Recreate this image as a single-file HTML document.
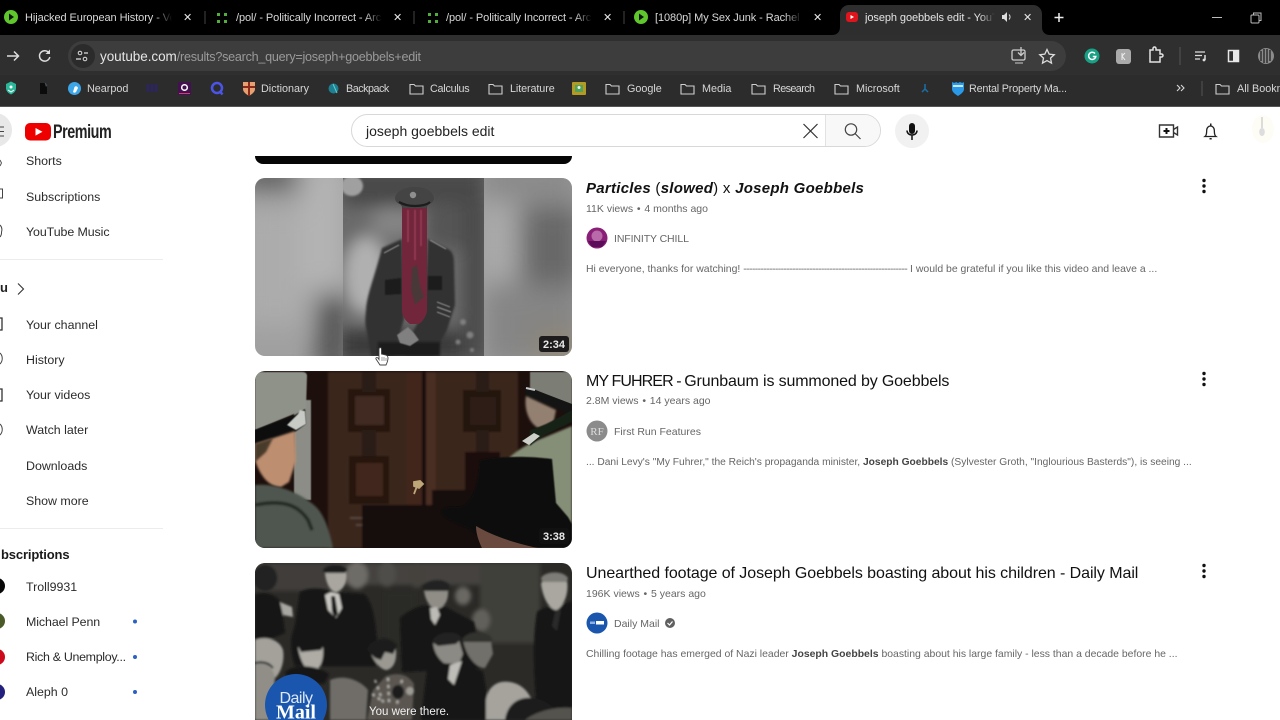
<!DOCTYPE html>
<html><head><meta charset="utf-8"><title>joseph goebbels edit - YouTube</title>
<style>
html,body{margin:0;padding:0;background:#fff}
body{width:1280px;height:720px;overflow:hidden;position:relative;font-family:"Liberation Sans",sans-serif}
.a{position:absolute}
.t{position:absolute;white-space:nowrap;line-height:20px}
.tab{color:#d8d8d8;font-size:11px;overflow:hidden;letter-spacing:-.08px;-webkit-mask-image:linear-gradient(90deg,#000 88%,transparent)}
.x{color:#e8e8e8;font-size:11px}
.bm{color:#d6d6d6;font-size:10.800px}
.sb{color:#2b2b2b;font-size:12.400px}
.ti{color:#111;font-size:16px;letter-spacing:-.07px}
.m{color:#666;font-size:10.500px}
.m i{font-style:normal;margin:0 3.800px}
.d{color:#666}
.d b{color:#444}
svg{position:absolute;overflow:hidden}
</style></head><body>

<!-- browser chrome -->
<div class="a" style="left:0;top:0;width:1280px;height:35px;background:#000"></div>
<div class="a" style="left:840px;top:5px;width:202px;height:31px;background:#2e2e2e;border-radius:9px 9px 0 0"></div>
<div class="a" style="left:0;top:35px;width:1280px;height:40px;background:#2f2f2f"></div>
<div class="a" style="left:0;top:75px;width:1280px;height:31px;background:#2c2c2c"></div>
<div class="a" style="left:0;top:106px;width:1280px;height:1px;background:#555"></div>
<div class="a" style="left:68px;top:41px;width:998px;height:30px;background:#3d3d3d;border-radius:15px"></div>
<div class="a" style="left:71px;top:44px;width:24px;height:24px;background:#2b2b2b;border-radius:12px"></div>

<svg style="left:0;top:0" width="1280" height="107" viewBox="0 0 1280 107" fill="none">
 <path d="M832 35c5 0 8-3 8-8v8zM1050 35c-5 0-8-3-8-8v8z" fill="#2e2e2e"/>
 <circle cx="11" cy="17" r="7" fill="#5fc62c"/><path d="M9 13.500l5 3.500-5 3.500z" fill="#111"/>
 <circle cx="641" cy="17" r="7" fill="#5fc62c"/><path d="M639 13.500l5 3.500-5 3.500z" fill="#111"/>
 <g fill="#4fae3c"><rect x="217" y="13" width="3" height="3"/><rect x="224" y="13" width="3" height="3"/><rect x="217" y="20" width="3" height="3"/><rect x="224" y="20" width="3" height="3"/>
 <rect x="428" y="13" width="3" height="3"/><rect x="435" y="13" width="3" height="3"/><rect x="428" y="20" width="3" height="3"/><rect x="435" y="20" width="3" height="3"/></g>
 <path d="M205 11v13M414 11v13M624 11v13" stroke="#444"/>
 <rect x="846" y="12" width="12" height="10" rx="3" fill="#e0141c"/><path d="M850.500 15l3.500 2-3.500 2z" fill="#fff"/>
 <path d="M1002 15h2l3-3v10l-3-3h-2z" fill="#ddd"/><path d="M1009 14.500a3.500 3.500 0 0 1 0 5" stroke="#ddd"/>
 <path d="M1059 13v9M1054.500 17.500h9" stroke="#eee" stroke-width="1.500"/>
 <path d="M1212 17.500h10" stroke="#bbb"/>
 <rect x="1251" y="15" width="8" height="8" stroke="#bbb" rx="1"/><path d="M1253.500 15v-2h7.500v7.500h-2" stroke="#bbb"/>
 <path d="M7 56h11M14 51.500l4.500 4.500-4.500 4.500" stroke="#ddd" stroke-width="1.500"/>
 <path d="M49 53a5.200 5.200 0 1 0 .8 4" stroke="#ddd" stroke-width="1.500"/><path d="M50 49.500v4.500h-4.500z" fill="#ddd"/>
 <circle cx="80" cy="53" r="1.800" stroke="#ddd"/><path d="M84 53h4M76 59h5" stroke="#ddd" stroke-width="1.300"/><circle cx="85" cy="59" r="1.800" stroke="#ddd"/>
 <rect x="1012" y="50" width="13" height="10" rx="1.500" stroke="#ccc" stroke-width="1.300"/><path d="M1015 63h8" stroke="#ccc"/><path d="M1021 47v8M1018 52.500l3 3 3-3" stroke="#ccc" stroke-width="1.300"/>
 <path d="M1047 49.500l2.200 4.600 5 .6-3.700 3.400 1 5-4.500-2.500-4.500 2.500 1-5-3.700-3.400 5-.6z" stroke="#ddd" stroke-width="1.300"/>
 <circle cx="1092" cy="56" r="7.500" fill="#19a186"/><path d="M1095 53.500a3.600 3.600 0 1 0 .8 3h-3" stroke="#fff" stroke-width="1.500"/>
 <rect x="1116" y="49" width="15" height="15" rx="3" fill="#aaa"/><path d="M1122 53v7M1122 56l3-3M1122 56l3 4" stroke="#eee"/>
 <path d="M1150 50h3v-1.500a1.500 1.500 0 0 1 3 0V50h4v4h1.500a1.500 1.500 0 0 1 0 3H1160v5h-10z" stroke="#e4e4e4" stroke-width="1.500"/>
 <path d="M1180 47v18" stroke="#555"/>
 <path d="M1195 52h10M1195 55.500h7M1195 59h5" stroke="#ddd" stroke-width="1.300"/><path d="M1205 55v5" stroke="#ddd" stroke-width="1.500"/><circle cx="1204" cy="60" r="1.400" fill="#ddd"/>
 <rect x="1228.500" y="50.500" width="10" height="11" stroke="#e8e8e8" stroke-width="1.500"/><rect x="1233" y="50" width="6" height="12" fill="#e8e8e8"/>
 <circle cx="1266" cy="56" r="8" fill="#8b8b8b"/><path d="M1261 51v10M1264 49v14M1267 49v14M1270 50v11" stroke="#222" stroke-width="1.300"/>
 <path d="M6 84l5-2.500 5 2.500v4c0 3-2 5-5 6.500-3-1.500-5-3.500-5-6.500z" fill="#2bb89a"/><circle cx="11" cy="87" r="1.500" fill="#fff"/><path d="M8 90l3 2 3-2" stroke="#fff"/>
 <path d="M40 83h5v3l2 1v7h-7z" fill="#0b0b0b"/><path d="M45 83l2 3" stroke="#456"/>
 <circle cx="74.500" cy="88.500" r="6.500" fill="#3da6e8"/><path d="M73 92l1.500-5a2 2 0 0 1 3.500 1l-1.500 3a2 2 0 0 1-3.500 1z" fill="#fff"/>
 <path d="M148 84v8M152 84v8M156 84v8" stroke="#2b2273" stroke-width="2"/>
 <rect x="178" y="82" width="13" height="13" fill="#431050"/><circle cx="184.500" cy="87.500" r="2.800" stroke="#fff" stroke-width="1.500"/><path d="M179 93.500h11" stroke="#d33a7a"/>
 <circle cx="217" cy="88" r="5" stroke="#4a54e8" stroke-width="2.500"/><path d="M220 91.500l2.500 3" stroke="#4a54e8" stroke-width="2.500"/>
 <path d="M243 82h12v7c0 3-3 5-6 7-3-2-6-4-6-7z" fill="#e8a070"/><path d="M249 82v14M243 87h12" stroke="#8a2a1a" stroke-width="2"/>
 <circle cx="333.500" cy="88.500" r="5" fill="#1d7f92"/><path d="M333 84l4 9" stroke="#6cc"/>
 <g stroke="#cfcfcf" stroke-width="1.100">
  <path d="M410 84.500h4l1.500 1.500h7.500v8h-13z"/>
  <path d="M489 84.500h4l1.500 1.500h7.500v8h-13z"/>
  <path d="M606 84.500h4l1.500 1.500h7.500v8h-13z"/>
  <path d="M681 84.500h4l1.500 1.500h7.500v8h-13z"/>
  <path d="M752 84.500h4l1.500 1.500h7.500v8h-13z"/>
  <path d="M835 84.500h4l1.500 1.500h7.500v8h-13z"/>
  <path d="M1216 84.500h4l1.500 1.500h7.500v8h-13z"/>
 </g>
 <rect x="572" y="82" width="14" height="13" rx="1" fill="#b39a22"/><rect x="575" y="85" width="8" height="7" fill="#4fa35a"/><circle cx="579" cy="87.500" r="1.500" fill="#eee"/>
 <path d="M925 84v5l-3 3M925 89l3 3" stroke="#1b6ea8" stroke-width="1.500"/>
 <path d="M952 82c2 1 3 1 4 0l2 1 2-1c2 1 3 1 4 0v7c0 3-3 5-6 7-3-2-6-4-6-7z" fill="#2a9ae8"/><path d="M953 86h10" stroke="#fff" stroke-width="1.500"/>
 <path d="M1177 85l3 3-3 3M1181 85l3 3-3 3" stroke="#d8d8d8" stroke-width="1.100"/>
 <path d="M1202 81v15" stroke="#555"/>
</svg>

<div class="t tab" style="left:25px;top:8px;width:147px">Hijacked European History - Ver</div>
<div class="t tab" style="left:236px;top:8px;width:146px">/pol/ - Politically Incorrect - Arc</div>
<div class="t tab" style="left:446px;top:8px;width:146px">/pol/ - Politically Incorrect - Arc</div>
<div class="t tab" style="left:655px;top:8px;width:147px">[1080p] My Sex Junk - Rachel B</div>
<div class="t tab" style="left:865px;top:8px;width:130px;color:#e4e4e4">joseph goebbels edit - YouT</div>
<div class="t x" style="left:183px;top:8px">✕</div>
<div class="t x" style="left:393px;top:8px">✕</div>
<div class="t x" style="left:603px;top:8px">✕</div>
<div class="t x" style="left:813px;top:8px">✕</div>
<div class="t x" style="left:1023px;top:8px">✕</div>
<div class="t" style="left:100px;top:47px;font-size:12.600px;color:#9a9a9a;letter-spacing:-.25px"><span style="color:#e6e6e6;font-size:13.500px;letter-spacing:-.05px">youtube.com</span>/results?search_query=joseph+goebbels+edit</div>

<div class="t bm" style="left:87px;top:79px">Nearpod</div>
<div class="t bm" style="left:261px;top:79px">Dictionary</div>
<div class="t bm" style="left:346px;top:79px;letter-spacing:-.5px">Backpack</div>
<div class="t bm" style="left:430px;top:79px;letter-spacing:-.25px">Calculus</div>
<div class="t bm" style="left:510px;top:79px;letter-spacing:-.1px">Literature</div>
<div class="t bm" style="left:627px;top:79px">Google</div>
<div class="t bm" style="left:702px;top:79px">Media</div>
<div class="t bm" style="left:773px;top:79px;letter-spacing:-.6px">Research</div>
<div class="t bm" style="left:856px;top:79px">Microsoft</div>
<div class="t bm" style="left:969px;top:79px;letter-spacing:-.2px">Rental Property Ma...</div>
<div class="t bm" style="left:1237px;top:79px">All Bookmarks</div>

<!-- masthead -->
<div class="a" style="left:-22px;top:113px;width:34px;height:34px;border-radius:50%;background:#e8e8e8"></div>
<svg style="left:0;top:120px" width="8" height="24"><path d="M0 7h4M0 11.500h4M0 16h4" stroke="#444"/></svg>
<svg style="left:25px;top:123px" width="26" height="18"><rect width="26" height="17.500" rx="5" fill="#ee0000"/><path d="M10.500 5l7 3.800-7 3.800z" fill="#fff"/></svg>
<div class="t" style="left:53px;top:122px;font-size:19.500px;font-weight:bold;color:#222;letter-spacing:-.6px;transform:scaleX(.735);transform-origin:0 50%">Premium</div>

<div class="a" style="left:351px;top:114px;width:530px;height:33px;box-sizing:border-box;border:1px solid #d8d8d8;border-radius:17px"></div>
<div class="a" style="left:825px;top:115px;width:55px;height:31px;background:#f8f8f8;border-left:1px solid #e2e2e2;border-radius:0 16px 16px 0;box-sizing:border-box"></div>
<div class="t" style="left:366px;top:121px;font-size:14px;color:#222">joseph goebbels edit</div>
<svg style="left:800px;top:119px" width="70" height="24" fill="none"><path d="M3.500 5l14 14M17.500 5l-14 14" stroke="#333" stroke-width="1.200"/><circle cx="51" cy="10.500" r="5.700" stroke="#444" stroke-width="1.200"/><path d="M55 14.500l5.500 5.500" stroke="#444" stroke-width="1.200"/></svg>
<div class="a" style="left:895px;top:114px;width:34px;height:34px;border-radius:50%;background:#f1f1f1"></div>
<svg style="left:900px;top:119px" width="24" height="24" fill="none"><rect x="9" y="4" width="6" height="11" rx="3" fill="#111"/><path d="M7 11.500c0 6 10 6 10 0M12 16v5" stroke="#111" stroke-width="1.500"/></svg>
<svg style="left:1155px;top:119px" width="70" height="24" fill="none">
 <path d="M4.500 6h14v12h-14zM18.500 10.500l4-2.500v8l-4-2.500" stroke="#333" stroke-width="1.400"/><path d="M11.500 9v6M8.500 12h6" stroke="#111" stroke-width="2"/>
 <path d="M50 17.500c2-1.500 1.500-4 1.700-6.500.2-2.500 2-4 3.800-4s3.600 1.500 3.800 4c.2 2.500-.3 5 1.700 6.500z" stroke="#222" stroke-width="1.300"/><path d="M54.500 19h2.200v1.500h-2.200zM55 4.500h1.500v2H55z" fill="#222"/>
</svg>
<div class="a" style="left:1252px;top:115px;width:22px;height:28px;background:#fdfdf6;border-radius:50%"></div>
<svg style="left:1256px;top:114px" width="12" height="26"><path d="M6 3v14" stroke="#bbb"/><ellipse cx="6" cy="18" rx="2.800" ry="4" fill="#ddd"/></svg>

<!-- sidebar -->
<div class="t sb" style="left:26px;top:151px">Shorts</div>
<div class="t sb" style="left:26px;top:187px">Subscriptions</div>
<div class="t sb" style="left:26px;top:222px;letter-spacing:-.08px">YouTube Music</div>
<div class="a" style="left:0;top:259px;width:163px;height:1px;background:#ececec"></div>
<div class="t" style="left:0;top:278px;font-size:13px;font-weight:bold;color:#222">u</div>
<svg style="left:16px;top:282px" width="10" height="14" fill="none"><path d="M2 1.500l5.500 5.500-5.500 5.500" stroke="#333" stroke-width="1.100"/></svg>
<div class="t sb" style="left:26px;top:315px">Your channel</div>
<div class="t sb" style="left:26px;top:350px">History</div>
<div class="t sb" style="left:26px;top:385px">Your videos</div>
<div class="t sb" style="left:26px;top:420px">Watch later</div>
<div class="t sb" style="left:26px;top:456px">Downloads</div>
<div class="t sb" style="left:26px;top:491px">Show more</div>
<div class="a" style="left:0;top:528px;width:163px;height:1px;background:#ececec"></div>
<div class="t" style="left:1px;top:545px;font-size:13px;font-weight:bold;color:#1a1a1a;letter-spacing:-.15px">bscriptions</div>
<div class="t sb" style="left:26px;top:577px">Troll9931</div>
<div class="t sb" style="left:26px;top:612px;letter-spacing:-.08px">Michael Penn</div>
<div class="t sb" style="left:26px;top:647px;letter-spacing:-.3px">Rich &amp; Unemploy...</div>
<div class="t sb" style="left:26px;top:682px">Aleph 0</div>
<svg style="left:0;top:150px" width="145" height="570" fill="none">
 <path d="M0 10l1.500 3-1.500 3" stroke="#555"/>
 <path d="M0 39h2.500v9H0" stroke="#444"/>
 <path d="M0 75a7 7 0 0 1 1.500 7 7 7 0 0 1-1.500 5" stroke="#444"/>
 <path d="M0 168h2v12H0" stroke="#333" stroke-width="1.300"/>
 <path d="M0 203c3 3 3 8 0 11" stroke="#444"/>
 <path d="M0 239h2v12H0" stroke="#333" stroke-width="1.300"/>
 <path d="M0 274c3 3 3 8 0 11" stroke="#444"/>
 <circle cx="-3" cy="436" r="8" fill="#080808"/>
 <circle cx="-3" cy="471" r="8" fill="#4a5a28"/>
 <circle cx="-3" cy="507" r="8" fill="#cc0a1c"/>
 <circle cx="-3" cy="542" r="8" fill="#23207e"/>
 <circle cx="135" cy="471.500" r="2" fill="#2a62c4"/><circle cx="135" cy="507" r="2" fill="#2a62c4"/><circle cx="135" cy="542" r="2" fill="#2a62c4"/>
</svg>

<!-- top partial thumb -->
<div class="a" style="left:255px;top:156px;width:317px;height:8px;background:#060606;border-radius:0 0 10px 10px"></div>

<!-- Thumb 1 -->
<svg style="left:255px;top:178px;border-radius:10px" width="317" height="178" viewBox="255 178 317 178">
 <defs>
  <filter id="b14" x="-30%" y="-30%" width="160%" height="160%"><feGaussianBlur stdDeviation="13"/></filter>
  <filter id="b8" x="-30%" y="-30%" width="160%" height="160%"><feGaussianBlur stdDeviation="8"/></filter>
  <filter id="b2" x="-20%" y="-20%" width="140%" height="140%"><feGaussianBlur stdDeviation="2"/></filter>
  <filter id="b1" x="-20%" y="-20%" width="140%" height="140%"><feGaussianBlur stdDeviation="1"/></filter>
  <filter id="b05" x="-20%" y="-20%" width="140%" height="140%"><feGaussianBlur stdDeviation=".6"/></filter>
 </defs>
 <rect x="255" y="178" width="317" height="178" fill="#a0a0a0"/>
 <g filter="url(#b14)">
  <rect x="235" y="160" width="75" height="30" fill="#5e5e5e"/>
  <rect x="240" y="205" width="70" height="120" fill="#acacac"/>
  <rect x="300" y="160" width="45" height="130" fill="#b4b4b4"/>
  <rect x="318" y="295" width="30" height="80" fill="#4c4c4c"/>
  <rect x="480" y="160" width="100" height="40" fill="#8a8a8a"/>
  <rect x="484" y="205" width="25" height="70" fill="#acacac"/>
  <rect x="522" y="205" width="60" height="80" fill="#686868"/>
  <rect x="484" y="285" width="100" height="80" fill="#858585"/>
  <rect x="535" y="330" width="45" height="30" fill="#8f8674"/>
 </g>
 <svg x="343" y="178" width="141" height="178" viewBox="343 178 141 178">
  <rect x="343" y="178" width="141" height="178" fill="#6a6a6a"/>
  <g filter="url(#b8)">
   <rect x="343" y="170" width="141" height="35" fill="#484848"/>
   <ellipse cx="366" cy="275" rx="24" ry="40" fill="#b0b0b0"/>
   <ellipse cx="448" cy="225" rx="22" ry="24" fill="#555"/>
   <ellipse cx="395" cy="222" rx="25" ry="15" fill="#858585"/>
   <rect x="340" y="330" width="147" height="30" fill="#3a3a3a"/>
   <rect x="462" y="200" width="25" height="160" fill="#4c4c4c"/>
   <rect x="448" y="250" width="12" height="70" fill="#6c6c6c"/>
  </g>
  <ellipse cx="352" cy="186" rx="11" ry="10" fill="#a0a0a0" filter="url(#b1)"/>
  <path d="M473 230v110" stroke="#8c8c8c" stroke-width="2" stroke-dasharray="5 9" filter="url(#b05)"/>
  <g fill="#808080" filter="url(#b1)"><circle cx="463" cy="322" r="3"/><circle cx="470" cy="335" r="3.500"/><circle cx="458" cy="342" r="2.500"/><circle cx="472" cy="350" r="2"/></g>
  <path d="M382 248l20-9 2 80-8 28-3 9h-22l-4-24c-2-6-2-12-1-22 1-16 7-28 16-62z" fill="#333" filter="url(#b1)"/>
  <path d="M428 239l20 10c4 2 6 6 6 14l1 42-8 25-14 26h-26l-2-8 20-40z" fill="#303030" filter="url(#b1)"/>
  <path d="M385 280l16-2v16l-16 1zM428 276h14v14h-14z" fill="#1f1f1f" filter="url(#b05)"/>
  <path d="M384 253l15-8M446 249l-16-9M437 302l13 5M437 307l14 5M437 312l13 5" stroke="#8a8a8a" stroke-width="1.200" filter="url(#b05)"/>
  <rect x="378" y="342" width="62" height="14" fill="#1e1e1e" filter="url(#b1)"/>
  <path d="M397 335l11-8 6 6 5 7-9 6-10-3z" fill="#808080" filter="url(#b05)"/>
  <path d="M402 206h25v105c-1 6-5 11-8 13h-9c-3-2-8-7-8-13z" fill="#72263c"/>
  <path d="M408 210v32M415 210v50M421 210v36" stroke="#9c4058" stroke-width="1.400" filter="url(#b05)"/>
  <path d="M412 268l5-3 3 20 4 12-9 8-4-16z" fill="#4a3838" filter="url(#b05)"/>
  <path d="M395 198c1-7 10-11 20-11s18 4 19 11c0 3-2 5-5 6l-3 4h-23l-3-4c-3-1-5-3-5-6z" fill="#444"/>
  <path d="M399 202c5 3 11 4 16 4s12-1 15-4" stroke="#1d1d1d" stroke-width="2.200" fill="none"/>
  <circle cx="413" cy="195" r="3.200" fill="#8f8f8f"/>
 </svg>
 <rect x="539" y="336" width="30" height="16" rx="3" fill="#1d1b1b"/>
 <text x="543" y="348" font-family="Liberation Sans" font-size="11" font-weight="bold" fill="#e8e8e8">2:34</text>
</svg>
<svg style="left:375px;top:346px" width="14" height="20" viewBox="0 0 14 20"><path d="M4.500 2c1-1 2 0 2 1v5l4 1c2 .5 2.500 1.500 2.500 3 0 3-1 5-2 7H5l-4-6c-.5-1 .5-2 2-1l1 1.500V3c0-.5 0-.8.500-1z" fill="#fff" stroke="#444" stroke-width=".9"/><path d="M7 11v4M9 11v4M11 12v3" stroke="#666" stroke-width=".6"/></svg>

<!-- Thumb 2 -->
<svg style="left:255px;top:371px;border-radius:10px" width="317" height="177" viewBox="255 371 317 177">
 <rect x="255" y="371" width="317" height="177" fill="#1d100c"/>
 <g filter="url(#b1)">
  <rect x="328" y="372" width="190" height="176" fill="#3a251d"/>
  <rect x="407" y="372" width="16" height="176" fill="#42281c"/>
  <rect x="422" y="372" width="4" height="176" fill="#150b08"/>
  <rect x="426" y="372" width="10" height="176" fill="#4a2e21"/>
  <rect x="348" y="389" width="42" height="43" fill="#26150f"/>
  <rect x="355" y="396" width="29" height="29" fill="#412a20"/>
  <rect x="362" y="372" width="14" height="20" fill="#2b1a14"/>
  <rect x="362" y="430" width="14" height="28" fill="#2b1a14"/>
  <rect x="349" y="456" width="40" height="48" fill="#26150f"/>
  <rect x="356" y="463" width="27" height="33" fill="#41281d"/>
  <rect x="463" y="390" width="38" height="42" fill="#20120d"/>
  <rect x="470" y="397" width="26" height="28" fill="#2e1b14"/>
  <rect x="476" y="372" width="13" height="20" fill="#2b1a14"/>
  <rect x="476" y="430" width="13" height="30" fill="#2b1a14"/>
  <rect x="465" y="452" width="35" height="40" fill="#1a0e0a"/>
  <path d="M350 518h24M356 525h26" stroke="#6a5a50"/>
  <rect x="362" y="505" width="75" height="45" fill="#170c09"/>
  <rect x="432" y="490" width="50" height="60" fill="#120a07"/>
 </g>
 <path d="M414 494l3-8M414 482l6-1 3 3-4 4-5-2z" stroke="#bfa678" stroke-width="1.800" fill="#bfa678"/>
 <rect x="294" y="400" width="17" height="100" fill="#8b8d86" filter="url(#b05)"/>
 <path d="M255 372h47c4 0 5 2 5 4l-1 33-51 21z" fill="#8f9289" filter="url(#b05)"/>
 <path d="M255 430l40-15 10-6 1 15-11 8-40 12z" fill="#0e0e0e" filter="url(#b05)"/>
 <path d="M287 425l11-11 2-4 5 1 1 13-10 6z" fill="#c8cac5" filter="url(#b05)"/>
 <path d="M255 460v-16l40-13 1 30-7 21-8 5c-10 0-20-8-26-27z" fill="#bd8e70" filter="url(#b1)"/>
 <path d="M255 444l18-6-7 14-11 10z" fill="#4a3a2a" filter="url(#b1)"/>
 <path d="M255 485c22-2 45 8 60 21 8 7 14 22 18 42h-78z" fill="#4f564f" filter="url(#b1)"/>
 <path d="M255 505c25-5 42-2 53 15l4 10" stroke="#232723" stroke-width="3" fill="none" filter="url(#b1)"/>
 <path d="M530 372h42v34l-42-18z" fill="#7c7e74" filter="url(#b05)"/>
 <path d="M525 386l47 18v11l-46-19z" fill="#141414"/>
 <path d="M526 388l9 2" stroke="#c8c8c8" stroke-width="2"/>
 <path d="M526 396l30 14-3 15-15 3c-10-6-14-20-12-32z" fill="#938071" filter="url(#b1)"/>
 <path d="M509 458c8-8 22-16 34-20l29-12v122h-40l-8-60z" fill="#858e77" filter="url(#b1)"/>
 <path d="M530 430c12-3 28-12 42-20v12c-14 7-30 13-42 24z" fill="#182219" filter="url(#b05)"/>
 <path d="M522 441l12-8 6 3-11 9z" fill="#ccd0c8"/>
 <path d="M480 460c20-4 50-4 72-1l4 44 12 14 4 7v24H498c-10-6-22-14-30-20-10-3-25-10-27-16 0-4 8-6 20-5 10-4 16-14 19-47z" fill="#0d110d" filter="url(#b05)"/>
 <path d="M476 526c14 8 30 15 62 22h-56c-3-6-6-14-6-22z" fill="#6a4a3e"/>
 <rect x="539" y="528" width="30" height="16" rx="3" fill="#111"/>
 <text x="543" y="540" font-family="Liberation Sans" font-size="11" font-weight="bold" fill="#e8e8e8">3:38</text>
</svg>

<!-- Thumb 3 -->
<svg style="left:255px;top:563px;border-radius:10px 10px 0 0" width="317" height="157" viewBox="255 563 317 157">
 <rect x="255" y="563" width="317" height="157" fill="#2b2a27"/>
 <g filter="url(#b2)">
  <rect x="480" y="563" width="60" height="80" fill="#403f3b"/>
  <rect x="330" y="563" width="150" height="22" fill="#44433f"/>
  <rect x="255" y="563" width="80" height="28" fill="#403e3a"/>
  <ellipse cx="357" cy="575" rx="11" ry="14" fill="#6e6c66"/>
  <ellipse cx="387" cy="574" rx="9" ry="13" fill="#504e49"/>
  <ellipse cx="417" cy="575" rx="9" ry="13" fill="#44423e"/>
  <ellipse cx="463" cy="596" rx="8" ry="9" fill="#6a6862"/>
  <ellipse cx="481" cy="620" rx="9" ry="11" fill="#62605a"/>
  <rect x="385" y="592" width="30" height="60" fill="#2a2926"/>
 </g>
 <g filter="url(#b1)">
  <path d="M255 595c8-4 20-2 26 8l4 30-30 12z" fill="#141414"/>
  <ellipse cx="265" cy="578" rx="12" ry="13" fill="#242424"/>
  <path d="M280 602l12 5 1 10-10-2z" fill="#a9a7a1"/>
  <path d="M300 592c10-5 22-4 34 0l30 2c12 10 14 50 13 72H295c-6-20-4-30 0-40z" fill="#141414"/>
  <path d="M325 573c0-8 18-9 21-2 2 8-1 18-9 21-6 1-11-8-12-19z" fill="#a8a69f"/>
  <path d="M323 570c4-6 20-7 24 0l-2 3h-20z" fill="#1c1c1c"/>
  <path d="M325 595l6-3 8 2 3 14-6 10-8-8z" fill="#c9c8c2"/>
  <path d="M331 596l4 0 3 18-3 4-3-6z" fill="#151515"/>
  <path d="M400 618c12-10 22-14 32-12h12l30 16 8 46-80 4z" fill="#141414"/>
  <path d="M424 590c2-8 20-10 24-1 1 10-3 19-11 20-6 0-12-8-13-19z" fill="#8f8d86"/>
  <path d="M422 588c2-8 24-12 28-1l-1 4h-26z" fill="#202020"/>
  <path d="M430 608l7-1 3 8-5 10-4-6z" fill="#bdbbb5"/>
  <path d="M537 612c6-4 10-6 18-5l17-6v119h-34c-4-40-6-80-1-108z" fill="#141414"/>
  <path d="M541 584c2-8 20-10 26-3 2 10-2 24-10 29-6 1-14-10-16-26z" fill="#a9a79f"/>
  <path d="M541 578c4-7 22-8 27 0l-1 4h-25z" fill="#7e7c76"/>
  <path d="M555 612l6-3-4 22-5-5z" fill="#2c2c2a"/>
  <path d="M255 640c8-4 24-2 28 10 2 12-3 24-8 28l-20-4z" fill="#a3a19a"/>
  <path d="M255 662c8-2 18 4 20 16l-4 42h-16z" fill="#908e87"/>
  <path d="M255 663c8-2 14 0 18 5" stroke="#1a1a1a" stroke-width="2" fill="none"/>
  <path d="M298 648c2-8 22-10 25-1 1 12-2 22-10 26-6 0-13-12-15-25z" fill="#aeaca5"/>
  <path d="M298 646c2-10 24-12 26-1l-3 5-20 2z" fill="#181818"/>
  <path d="M285 672c10-8 30-8 44 2l-5 10-35-4z" fill="#161616"/>
  <path d="M369 648c6-10 24-8 27 2 1 10-2 18-9 20-6 0-14-8-18-22z" fill="#9a9891"/>
  <path d="M367 650c2-12 24-16 30-4l-4 8-8-2-4 8-6-2z" fill="#1b1b1b"/>
  <path d="M386 676c12-4 22-2 28 8l-2 36h-45l6-30z" fill="#5b5651"/>
  <path d="M433 640c4-8 20-8 26 0l4 14-6 14-12-4c-8-6-12-14-12-24z" fill="#8c8a84"/>
  <path d="M432 642c2-10 24-14 30-4l-6 6-18 2z" fill="#222"/>
  <path d="M463 640c4-8 22-8 28 0l2 14-8 14c-10 0-20-14-22-28z" fill="#72706b"/>
  <path d="M462 640c4-10 24-10 30-2v4h-30z" fill="#30302d"/>
  <path d="M428 664c16-2 42 0 55 8l8 48h-70z" fill="#121212"/>
  <path d="M450 665l12-4-8 24-6-6z" fill="#bebdb7"/>
  <path d="M486 700c2-14 12-20 24-18 14 2 22 14 24 26l-6 12h-42z" fill="#a5a39c"/>
  <path d="M505 720c2-16 14-24 28-22 16 2 26 14 28 22z" fill="#1e1e1e"/>
  <path d="M525 720c10-8 30-14 47-12v12z" fill="#55534e"/>
  <path d="M330 680c14-6 30 0 38 10l-2 30h-36z" fill="#6f6d68"/>
  <path d="M375 680l8 22M388 678l1 24M402 680l-5 24M372 694l12 8" stroke="#bdbcb5" stroke-width="2" stroke-dasharray="3 4"/>
  <ellipse cx="398" cy="692" rx="6" ry="7" fill="#1a1a1a"/>
  <circle cx="410" cy="691" r="4" fill="#9d9b94"/>
 </g>
 <circle cx="296" cy="705" r="31" fill="#1a56ae"/>
 <text x="296" y="703" text-anchor="middle" font-family="Liberation Sans" font-size="16" fill="#dfe8f6" style="letter-spacing:-.5px">Daily</text>
 <text x="296" y="718.500" text-anchor="middle" font-family="Liberation Serif" font-size="20" font-weight="bold" fill="#fff">Mail</text>
 <text x="369" y="715" font-family="Liberation Sans" font-size="11.500" fill="#f0f0f0">You were there.</text>
</svg>

<!-- Result 1 -->
<div class="t" style="left:586px;top:179px;font-size:15px;color:#111;letter-spacing:.27px"><b><em>Particles</em></b> (<b><em>slowed</em></b>) x <b><em>Joseph Goebbels</em></b></div>
<div class="t m" style="left:586px;top:199px">11K views<i>•</i>4 months ago</div>
<svg style="left:586px;top:227px" width="22" height="22"><circle cx="11" cy="11" r="10.500" fill="#8a1f78"/><circle cx="11" cy="9" r="5.500" fill="#b96aa8"/><path d="M2 14h18l-4 6H6z" fill="#5a0d58"/></svg>
<div class="t m" style="left:614px;top:229px;letter-spacing:-.1px">INFINITY CHILL</div>
<div class="t d" style="left:586px;top:260px;font-size:10.450px">Hi everyone, thanks for watching! <span style="letter-spacing:-.6px">---------------------------------------------------------</span> I would be grateful if you like this video and leave a ...</div>
<svg style="left:1200px;top:178px" width="8" height="16"><circle cx="4" cy="2.500" r="1.700" fill="#111"/><circle cx="4" cy="8" r="1.700" fill="#111"/><circle cx="4" cy="13.500" r="1.700" fill="#111"/></svg>

<!-- Result 2 -->
<div class="t ti" style="left:586px;top:372px"><span style="letter-spacing:-.9px">MY FUHRER - </span><span style="letter-spacing:-.14px">Grunbaum is summoned by Goebbels</span></div>
<div class="t m" style="left:586px;top:391px">2.8M views<i>•</i>14 years ago</div>
<svg style="left:586px;top:420px" width="22" height="22"><circle cx="11" cy="11" r="10.500" fill="#8b8b8b"/><text x="11" y="15" text-anchor="middle" font-family="Liberation Serif" font-size="11" fill="#ddd">RF</text></svg>
<div class="t m" style="left:614px;top:422px">First Run Features</div>
<div class="t d" style="left:586px;top:453px;font-size:10.230px">... Dani Levy's "My Fuhrer," the Reich's propaganda minister, <b>Joseph Goebbels</b> (Sylvester Groth, "Inglourious Basterds"), is seeing ...</div>
<svg style="left:1200px;top:371px" width="8" height="16"><circle cx="4" cy="2.500" r="1.700" fill="#111"/><circle cx="4" cy="8" r="1.700" fill="#111"/><circle cx="4" cy="13.500" r="1.700" fill="#111"/></svg>

<!-- Result 3 -->
<div class="t ti" style="left:586px;top:564px">Unearthed footage of Joseph Goebbels boasting about his children - Daily Mail</div>
<div class="t m" style="left:586px;top:584px">196K views<i>•</i>5 years ago</div>
<svg style="left:586px;top:612px" width="22" height="22"><circle cx="11" cy="11" r="10.500" fill="#1a56ae"/><rect x="4" y="9.500" width="5" height="2.500" fill="#8fb0e0"/><rect x="10" y="9" width="8" height="3.500" fill="#fff"/></svg>
<div class="t m" style="left:614px;top:614px">Daily Mail</div>
<svg style="left:664px;top:617px" width="12" height="12"><circle cx="6" cy="6" r="5" fill="#606060"/><path d="M3.500 6l2 2 3-3.500" stroke="#fff" fill="none" stroke-width="1.200"/></svg>
<div class="t d" style="left:586px;top:645px;font-size:10.430px">Chilling footage has emerged of Nazi leader <b>Joseph Goebbels</b> boasting about his large family - less than a decade before he ...</div>
<svg style="left:1200px;top:563px" width="8" height="16"><circle cx="4" cy="2.500" r="1.700" fill="#111"/><circle cx="4" cy="8" r="1.700" fill="#111"/><circle cx="4" cy="13.500" r="1.700" fill="#111"/></svg>
</body></html>
